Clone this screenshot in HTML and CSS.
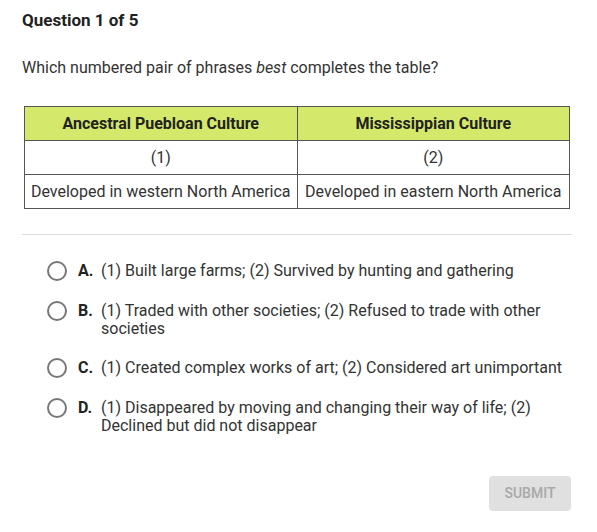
FILE: index.html
```html
<!DOCTYPE html>
<html>
<head>
<meta charset="utf-8">
<link rel="stylesheet" href="styles.css">
</head>
<body>
<div class="page">
  <h1 class="title">Question 1 of 5</h1>
  <p class="prompt">Which numbered pair of phrases <em>best</em> completes the table?</p>
  <table class="culture">
    <thead>
      <tr><th>Ancestral Puebloan Culture</th><th>Mississippian Culture</th></tr>
    </thead>
    <tbody>
      <tr><td>(1)</td><td>(2)</td></tr>
      <tr><td>Developed in western North America</td><td>Developed in eastern North America</td></tr>
    </tbody>
  </table>
  <hr class="rule">
  <ul class="options">
    <li class="option"><span class="radio"></span><span class="letter">A.</span><span class="text">(1) Built large farms; (2) Survived by hunting and gathering</span></li>
    <li class="option"><span class="radio"></span><span class="letter">B.</span><span class="text">(1) Traded with other societies; (2) Refused to trade with other societies</span></li>
    <li class="option"><span class="radio"></span><span class="letter">C.</span><span class="text">(1) Created complex works of art; (2) Considered art unimportant</span></li>
    <li class="option"><span class="radio"></span><span class="letter">D.</span><span class="text">(1) Disappeared by moving and changing their way of life; (2) Declined but did not disappear</span></li>
  </ul>
  <div class="actions"><button class="submit">SUBMIT</button></div>
</div>
</body>
</html>
```
FILE: styles.css
```css
html, body {
  margin: 0;
  padding: 0;
  background: #fff;
}
body {
  font-family: Roboto, "Liberation Sans", sans-serif;
  color: #333;
}
.page {
  padding: 10px 25px 0 22px;
}
.title {
  margin: 0;
  font-size: 17px;
  line-height: 20px;
  font-weight: 700;
  color: #222;
}
.prompt {
  margin: 28px 0 0;
  font-size: 16px;
  line-height: 20px;
  color: #333;
}
.culture {
  margin: 28px 0 0 2px;
  border-collapse: collapse;
  width: 546px;
  font-size: 16px;
  color: #333;
}
.culture th, .culture td {
  border: 1px solid #555;
  text-align: center;
  padding: 0 4px;
  height: 33px;
  width: 50%;
  white-space: nowrap;
}
.culture th {
  background: #d4e86b;
  font-weight: 700;
  color: #222;
}
.rule {
  margin: 25px 0 0;
  border: 0;
  border-top: 1px solid #ddd;
  width: 550px;
}
.options {
  list-style: none;
  margin: 27px 0 0;
  padding: 0 0 0 25px;
}
.option {
  display: flex;
  align-items: flex-start;
  font-size: 16px;
  line-height: 18.5px;
  margin-bottom: 20.5px;
  color: #333;
}
.radio {
  flex: none;
  box-sizing: border-box;
  width: 20px;
  height: 20px;
  border: 2px solid #777;
  border-radius: 50%;
  margin-top: -1px;
  margin-right: 11px;
}
.letter {
  flex: none;
  width: 23px;
  font-weight: 700;
  color: #222;
}
.actions {
  display: flex;
  justify-content: flex-end;
  margin-top: 40px;
}
.submit {
  font-family: Roboto, "Liberation Sans", sans-serif;
  font-size: 14px;
  font-weight: 500;
  color: #a8a8a8;
  background: #e0e0e0;
  border: 0;
  border-radius: 4px;
  width: 82px;
  height: 35px;
  margin-right: 1px;
}
```
